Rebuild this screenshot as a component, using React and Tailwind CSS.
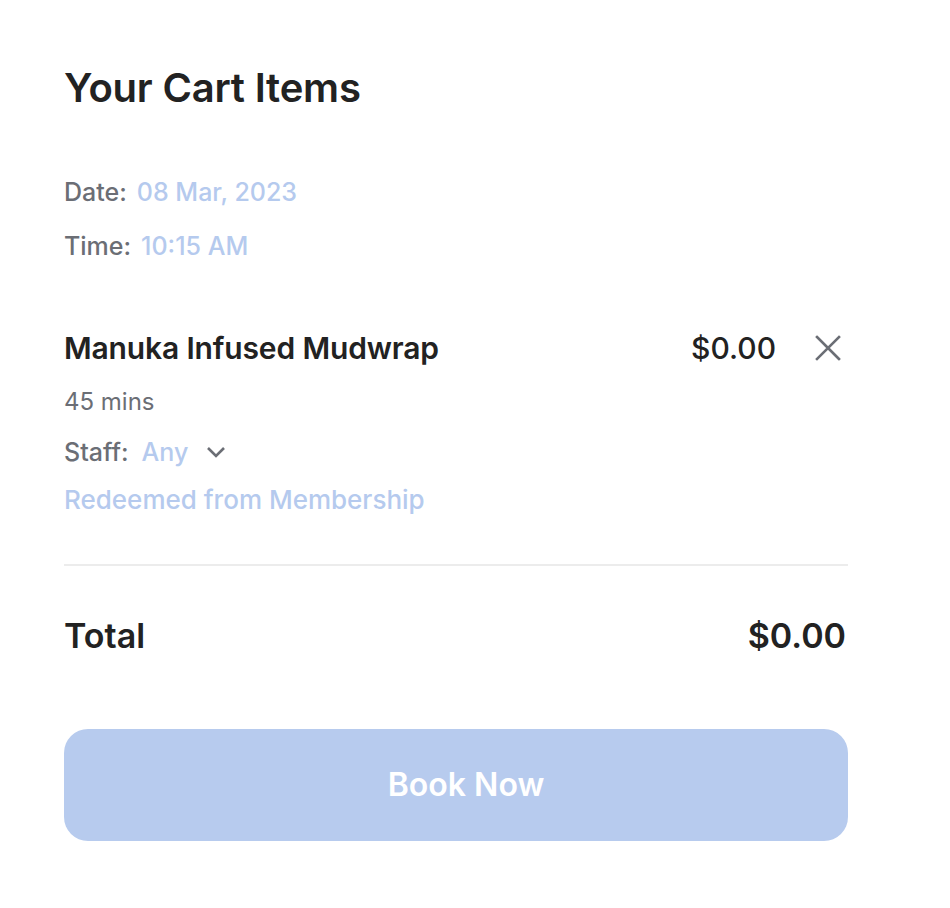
import React from "react";

const font = { fontFamily: "Inter, 'Noto Sans', sans-serif" };

const CloseIcon = () => (
  <svg width="28" height="26" viewBox="0 0 28 26" className="mr-[6px]">
    <path d="M3 2 L25 24 M25 2 L3 24" stroke="#6b6e75" strokeWidth="2.6" strokeLinecap="square" fill="none" />
  </svg>
);

const Chevron = () => (
  <svg width="20" height="12" viewBox="0 0 20 12" className="ml-[18px]">
    <path d="M2 2 L10 10 L18 2" stroke="#6b6e75" strokeWidth="2.6" fill="none" />
  </svg>
);

export default function App() {
  return (
    <div className="min-h-screen bg-white" style={font}>
      <div className="w-[784px] ml-16 pt-[64px]">
        <h1 className="text-[40px] leading-[48px] font-semibold text-[#222222] tracking-[-0.005em]">
          Your Cart Items
        </h1>

        <div className="mt-[64px] flex flex-col gap-[22px] text-[25px] leading-[32px] font-medium">
          <div className="flex gap-[10px]">
            <span className="text-[#6b6e75]">Date:</span>
            <span className="text-[#b5caee]">08 Mar, 2023</span>
          </div>
          <div className="flex gap-[10px]">
            <span className="text-[#6b6e75]">Time:</span>
            <span className="text-[#b5caee]">10:15 AM</span>
          </div>
        </div>

        <div className="mt-[66px] flex items-center justify-between">
          <span className="text-[30px] leading-[40px] font-semibold text-[#222222] tracking-[-0.005em]">
            Manuka Infused Mudwrap
          </span>
          <div className="flex items-center gap-[38px]">
            <span className="text-[30px] leading-[40px] font-medium text-[#222222]">$0.00</span>
            <CloseIcon />
          </div>
        </div>

        <div className="mt-[18px] text-[24px] leading-[32px] text-[#6b6e75]">45 mins</div>

        <div className="mt-[18px] flex items-center text-[25px] leading-[32px]">
          <span className="font-medium text-[#6b6e75]">Staff:</span>
          <span className="ml-[13px] font-medium text-[#b5caee]">Any</span>
          <Chevron />
        </div>

        <div className="mt-[16px] text-[26px] leading-[32px] font-medium text-[#b5caee]">
          Redeemed from Membership
        </div>

        <div className="mt-[48px] h-[2px] bg-[#ececec]" />

        <div className="mt-[50px] flex items-center justify-between text-[34px] leading-[40px] font-semibold text-[#222222]">
          <span>Total</span>
          <span className="mr-[2px]">$0.00</span>
        </div>

        <button className="mt-[73px] w-full h-[112px] rounded-[24px] bg-[#b7cbee] text-white text-[32px] font-semibold pl-[20px]">
          Book Now
        </button>
      </div>
    </div>
  );
}
